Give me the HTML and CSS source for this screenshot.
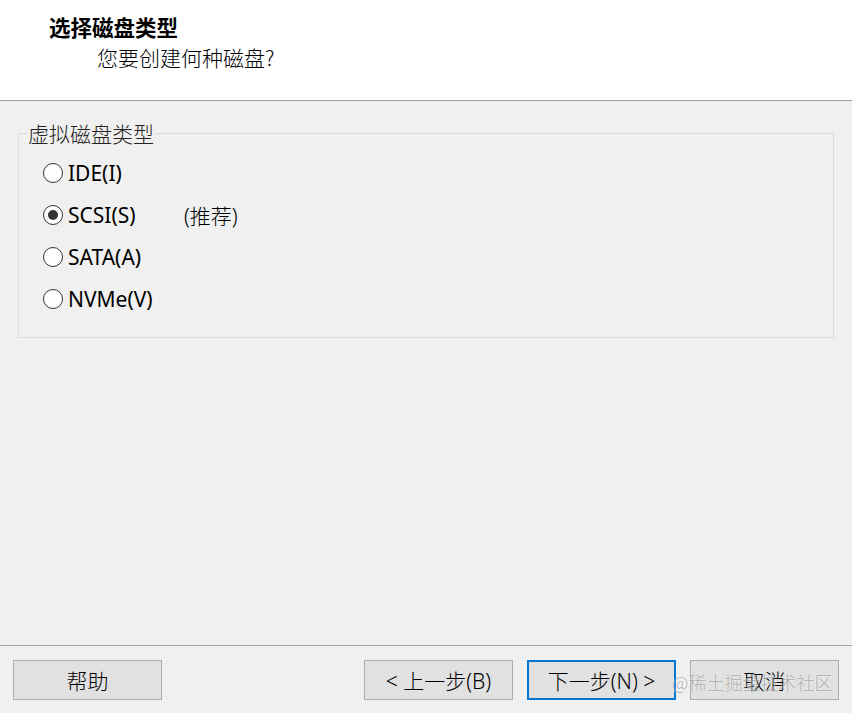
FILE: index.html
```html
<!DOCTYPE html>
<html lang="zh-CN">
<head>
    <meta charset="UTF-8">
    <meta name="viewport" content="width=device-width, initial-scale=1.0">
    <title>新建虚拟机向导</title>
    <link rel="stylesheet" href="styles.css">
</head>
<body>
    <div class="wizard">
        <div class="header">
            <h1 class="title">选择磁盘类型</h1>
            <p class="subtitle">您要创建何种磁盘?</p>
        </div>
        <div class="main">
            <fieldset class="group">
                <legend>虚拟磁盘类型</legend>
                <label class="option">
                    <span class="radio"></span>
                    <span class="opt-text">IDE(I)</span>
                </label>
                <label class="option">
                    <span class="radio checked"></span>
                    <span class="opt-text">SCSI(S)</span>
                    <span class="note">(推荐)</span>
                </label>
                <label class="option">
                    <span class="radio"></span>
                    <span class="opt-text">SATA(A)</span>
                </label>
                <label class="option">
                    <span class="radio"></span>
                    <span class="opt-text">NVMe(V)</span>
                </label>
            </fieldset>
        </div>
        <div class="footer">
            <button class="btn">帮助</button>
            <div class="nav-buttons">
                <button class="btn">&lt; 上一步(B)</button>
                <button class="btn default">下一步(N) &gt;</button>
                <button class="btn">取消</button>
            </div>
            <div class="watermark">@稀土掘金技术社区</div>
        </div>
    </div>
</body>
</html>
```

FILE: styles.css
```css
body {
    margin: 0;
    background-color: #f0f0f0;
    font-family: "Noto Sans", "Noto Sans CJK SC", sans-serif;
    color: #000;
}
.wizard {
    width: 852px;
    height: 713px;
    display: flex;
    flex-direction: column;
}
.header {
    height: 100px;
    background-color: #fff;
    border-bottom: 1px solid #a0a0a0;
}
.title {
    margin: 0;
    padding: 14px 0 0 49px;
    font-family: "Noto Sans CJK SC", sans-serif;
    font-size: 21.5px;
    font-weight: bold;
    line-height: 26px;
}
.subtitle {
    margin: 4px 0 0 97px;
    font-family: "Noto Sans CJK SC", sans-serif;
    font-size: 21px;
    font-weight: 300;
    line-height: 26px;
}
.main {
    height: 523px;
    padding: 21px 18px 0 18px;
}
.group {
    margin: 0;
    padding: 8px 0 0 0;
    height: 206px;
    border: 1px solid #dcdcdc;
}
.group legend {
    margin-left: 8px;
    padding: 0 1px;
    font-family: "Noto Sans CJK SC", sans-serif;
    font-size: 21px;
    font-weight: 300;
    line-height: 22px;
    color: #222;
}
.option {
    display: flex;
    align-items: center;
    height: 42px;
    padding-left: 24px;
    font-size: 21px;
}
.radio {
    width: 18px;
    height: 18px;
    border: 1px solid #333;
    border-radius: 50%;
    background-color: #fff;
    display: flex;
    justify-content: center;
    align-items: center;
    margin-right: 5px;
}
.radio.checked::after {
    content: "";
    width: 10px;
    height: 10px;
    border-radius: 50%;
    background-color: #333;
}
.opt-text {
    min-width: 116px;
}
.note {
    font-weight: 300;
}
.footer {
    position: relative;
    flex: 1;
    border-top: 1px solid #a0a0a0;
    display: flex;
    justify-content: space-between;
    align-items: flex-start;
    padding: 14px 13px 0 13px;
}
.nav-buttons {
    display: flex;
    gap: 14px;
}
.btn {
    width: 149px;
    height: 40px;
    margin: 0;
    padding: 0;
    background-color: #e1e1e1;
    border: 1px solid #adadad;
    font-family: "Noto Sans", "Noto Sans CJK SC", sans-serif;
    font-size: 21px;
    font-weight: 300;
    color: #000;
}
.btn.default {
    border: 2px solid #0078d7;
}
.watermark {
    position: absolute;
    left: 672px;
    top: 23px;
    font-family: "Noto Sans CJK SC", sans-serif;
    font-size: 18px;
    font-weight: 300;
    color: rgba(130, 130, 130, 0.6);
    text-shadow: 0 0 2px rgba(255, 255, 255, 0.8);
    white-space: nowrap;
}
```
